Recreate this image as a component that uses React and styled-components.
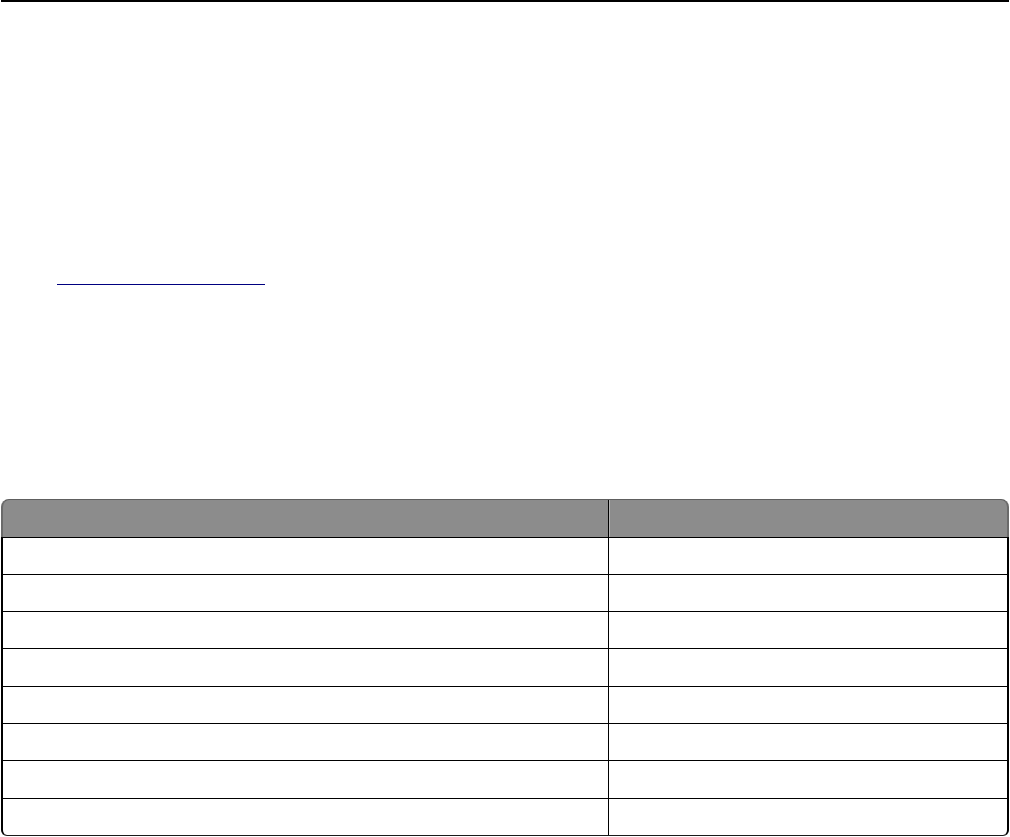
import React from "react";
import styled, { createGlobalStyle } from "styled-components";

const Global = createGlobalStyle`
  html, body { margin: 0; padding: 0; background: #ffffff; }
  body { font-family: "Liberation Sans", Arial, sans-serif; color: #000; }
  * { box-sizing: border-box; }
`;

const Page = styled.div`
  width: 1010px;
  height: 837px;
  display: flex;
  flex-direction: column;
  padding: 0 1px;
  overflow: hidden;
`;

const Rule = styled.div`
  height: 2px;
  width: 1008px;
  background: #000;
`;

const LinkRow = styled.div`
  margin-top: 270px;
  padding-left: 56px;
`;

const DocLink = styled.a`
  display: block;
  width: 208px;
  height: 13px;
  border-bottom: 1px solid #000080;
  color: #ffffff;
  font-size: 12px;
  line-height: 12px;
  text-decoration: none;
`;

const Table = styled.div`
  margin-top: 214px;
  width: 1008px;
  display: flex;
  flex-direction: column;
`;

const Header = styled.div`
  display: grid;
  grid-template-columns: 606px 1fr;
  height: 37.5px;
  background: #8c8c8c;
  border-top: 1.5px solid #5e5e5e;
  border-left: 2px solid #6a6a6a;
  border-right: 2px solid #6a6a6a;
  border-radius: 8px 8px 0 0;
`;

const HeadCell = styled.div`
  border-right: ${(p) => (p.$divider ? "1.5px solid #000" : "none")};
  box-shadow: ${(p) => (p.$divider ? "1px 0 0 #b5b5b5" : "none")};
`;

const Body = styled.div`
  display: flex;
  flex-direction: column;
  border-left: 2px solid #000;
  border-right: 2px solid #000;
  border-bottom: 1.5px solid #1a1a1a;
  border-radius: 0 0 6px 6px;
`;

const Row = styled.div`
  display: grid;
  grid-template-columns: 606px 1fr;
  height: 37.3px;
  border-top: 1.5px solid #000;
`;

const Cell = styled.div`
  border-right: ${(p) => (p.$divider ? "1.5px solid #000" : "none")};
`;

const rows = Array.from({ length: 8 }, (_, i) => i);

export default function App() {
  return (
    <>
      <Global />
      <Page>
        <Rule />
        <LinkRow>
          <DocLink href="#">&nbsp;</DocLink>
        </LinkRow>
        <Table>
          <Header>
            <HeadCell $divider />
            <HeadCell />
          </Header>
          <Body>
            {rows.map((r) => (
              <Row key={r}>
                <Cell $divider />
                <Cell />
              </Row>
            ))}
          </Body>
        </Table>
      </Page>
    </>
  );
}
